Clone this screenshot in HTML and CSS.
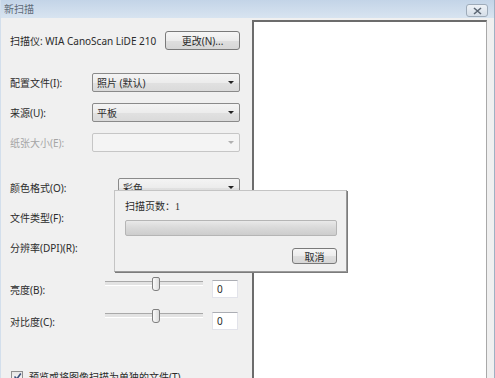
FILE: index.html
```html
<!DOCTYPE html>
<html lang="zh-CN">
  <head>
    <meta charset="UTF-8" />
    <meta name="viewport" content="width=device-width, initial-scale=1.0" />
    <title>新扫描</title>
    <link rel="stylesheet" href="styles.css">
  </head>
  <body>
    <div class="window">
      <div class="titlebar">
        <span class="title">新扫描</span>
        <button class="close" aria-label="关闭">
          <svg width="9" height="8" viewBox="0 0 9 8">
            <path d="M1 1 L8 7 M8 1 L1 7" stroke="#5b6673" stroke-width="1.6" fill="none" />
          </svg>
        </button>
      </div>

      <div class="client">
        <div class="settings">
          <div class="scanner-row">
            <span>扫描仪: WIA CanoScan LiDE 210</span>
            <button class="btn change">更改(N)...</button>
          </div>

          <div class="sep"></div>

          <div class="group">
            <div class="field">
              <label>配置文件(I):</label>
              <div class="select"><span>照片 (默认)</span><i class="arrow"></i></div>
            </div>
            <div class="field">
              <label>来源(U):</label>
              <div class="select"><span>平板</span><i class="arrow"></i></div>
            </div>
            <div class="field disabled">
              <label>纸张大小(E):</label>
              <div class="select"><span></span><i class="arrow"></i></div>
            </div>
          </div>

          <div class="sep"></div>

          <div class="group wide">
            <div class="field">
              <label>颜色格式(O):</label>
              <div class="select"><span>彩色</span><i class="arrow"></i></div>
            </div>
            <div class="field">
              <label>文件类型(F):</label>
              <div class="select"><span></span><i class="arrow"></i></div>
            </div>
            <div class="field">
              <label>分辨率(DPI)(R):</label>
              <div class="select"><span></span><i class="arrow"></i></div>
            </div>
          </div>

          <div class="sep"></div>

          <div class="sliders">
            <div class="slider-row">
              <label>亮度(B):</label>
              <div class="slider"><span class="thumb"></span></div>
              <div class="num">0</div>
            </div>
            <div class="slider-row">
              <label>对比度(C):</label>
              <div class="slider"><span class="thumb"></span></div>
              <div class="num">0</div>
            </div>
          </div>

          <div class="check-row">
            <span class="checkbox">
              <svg width="9" height="9" viewBox="0 0 9 9">
                <path d="M1.5 4.5 L3.8 7 L7.8 1.5" stroke="#3a4f7a" stroke-width="1.6" fill="none" />
              </svg>
            </span>
            <span>预览或将图像扫描为单独的文件(T)</span>
          </div>
        </div>

        <div class="preview"></div>
      </div>

      <div class="progress-dialog">
        <p class="pages">扫描页数：<span class="count">1</span></p>
        <div class="progress"></div>
        <div class="dialog-actions">
          <button class="btn cancel">取消</button>
        </div>
      </div>
    </div>
  </body>
</html>
```

FILE: styles.css
```css
* {
  margin: 0;
  padding: 0;
  box-sizing: border-box;
}

body {
  width: 495px;
  height: 378px;
  overflow: hidden;
  font-family: "Noto Sans", "Noto Sans CJK SC", sans-serif;
  font-size: 10px;
  color: #2b2b2b;
  background: #f0f0f0;
}

.window {
  position: relative;
  display: flex;
  flex-direction: column;
  height: 378px;
  background: #f0f0f0;
  border-left: 1px solid #d3dfec;
  border-right: 1px solid #9fb1c4;
}

.titlebar {
  height: 18px;
  display: flex;
  justify-content: space-between;
  padding: 0 6px 0 3px;
  background: linear-gradient(#c3d4e7, #d8e4f0);
}

.title {
  line-height: 18px;
  color: #5f6b78;
}

.close {
  width: 22px;
  height: 13px;
  margin-top: 4px;
  display: flex;
  align-items: center;
  justify-content: center;
  border: 1px solid #9eabb9;
  border-radius: 3px;
  background: linear-gradient(#eef2f7, #d5dee8);
}

.client {
  flex: 1;
  display: flex;
  padding: 0 7px 0 9px;
  min-height: 0;
}

.settings {
  width: 230px;
  padding-top: 13px;
  display: flex;
  flex-direction: column;
}

.scanner-row {
  height: 19px;
  display: flex;
  align-items: center;
  justify-content: space-between;
}

.btn {
  font-family: inherit;
  font-size: 10px;
  color: #2b2b2b;
  border: 1px solid #7a7a7a;
  border-radius: 3px;
  background: linear-gradient(#f6f6f6 0%, #ececec 50%, #dfdfdf 51%, #d6d6d6 100%);
}

.change {
  width: 75px;
  height: 19px;
}

.sep {
  height: 1px;
  background: #d4d4d4;
}

.scanner-row + .sep {
  margin-top: 11px;
}

.group {
  display: grid;
  grid-template-columns: 82px 1fr;
  row-gap: 11px;
  margin-top: 12px;
  margin-bottom: 12px;
}

.group.wide {
  grid-template-columns: 108px 1fr;
  margin-top: 14px;
  margin-bottom: 9px;
}

.field {
  display: contents;
}

.field label {
  align-self: center;
}

.select {
  height: 19px;
  display: flex;
  align-items: center;
  justify-content: space-between;
  padding: 0 5px 0 4px;
  border: 1px solid #8a8a8a;
  border-radius: 2px;
  background: linear-gradient(#f4f4f4 0%, #ececec 50%, #e1e1e1 51%, #dadada 100%);
}

.arrow {
  width: 0;
  height: 0;
  border-left: 3px solid transparent;
  border-right: 3px solid transparent;
  border-top: 3px solid #222;
}

.field.disabled label {
  color: #a5a5a5;
}

.field.disabled .select {
  border-color: #c6c6c6;
  background: #f4f4f4;
}

.field.disabled .arrow {
  border-top-color: #b0b0b0;
}

.sliders {
  margin-top: 14px;
  display: flex;
  flex-direction: column;
  gap: 14px;
}

.slider-row {
  height: 18px;
  display: grid;
  grid-template-columns: 95px 98px 26px;
  align-items: center;
}

.slider {
  position: relative;
  align-self: start;
  height: 18px;
}

.slider::before {
  content: "";
  position: absolute;
  left: 0;
  right: 0;
  top: 1px;
  height: 3px;
  border-top: 1px solid #a9a9a9;
  border-bottom: 1px solid #ffffff;
  background: #e3e3e3;
}

.thumb {
  position: absolute;
  left: 47px;
  top: -3px;
  width: 8px;
  height: 14px;
  border: 1px solid #808080;
  border-radius: 2px 2px 3px 3px;
  background: linear-gradient(90deg, #fbfbfb, #dcdcdc);
}

.num {
  height: 18px;
  margin-left: 9px;
  width: 26px;
  line-height: 16px;
  padding-left: 4px;
  border: 1px solid #e2e3ea;
  border-top-color: #abadb3;
  background: #fff;
}

.check-row {
  margin-top: 39px;
  display: flex;
  align-items: center;
  gap: 6px;
  padding-left: 1px;
}

.checkbox {
  width: 12px;
  height: 12px;
  display: flex;
  align-items: center;
  justify-content: center;
  border: 1px solid #8f8f8f;
  background: linear-gradient(#e6e6e6, #fbfbfb);
}

.preview {
  width: 235px;
  margin-left: 12px;
  margin-top: 2px;
  background: #fff;
  border-top: 2px solid #6c6c6c;
  border-left: 2px solid #6c6c6c;
  border-right: 1px solid #a9a9a9;
}

.progress-dialog {
  position: absolute;
  left: 113px;
  top: 190px;
  width: 233px;
  height: 82px;
  padding: 8px 9px 0 10px;
  background: #f0f0f0;
  border: 1px solid #c4c4c4;
  border-right-color: #9a9a9a;
  border-bottom-color: #9a9a9a;
  box-shadow: 1px 1px 0 #7c7c7c;
}

.pages {
  line-height: 14px;
}

.count {
  font-family: "Liberation Serif", serif;
}

.progress {
  margin-top: 6px;
  height: 16px;
  border: 1px solid #b5b5b5;
  border-radius: 2px;
  background: linear-gradient(#e9e9e9 0%, #dadada 45%, #cdcdcd 100%);
}

.dialog-actions {
  margin-top: 12px;
  display: flex;
  justify-content: flex-end;
}

.cancel {
  width: 45px;
  height: 16px;
}
```
